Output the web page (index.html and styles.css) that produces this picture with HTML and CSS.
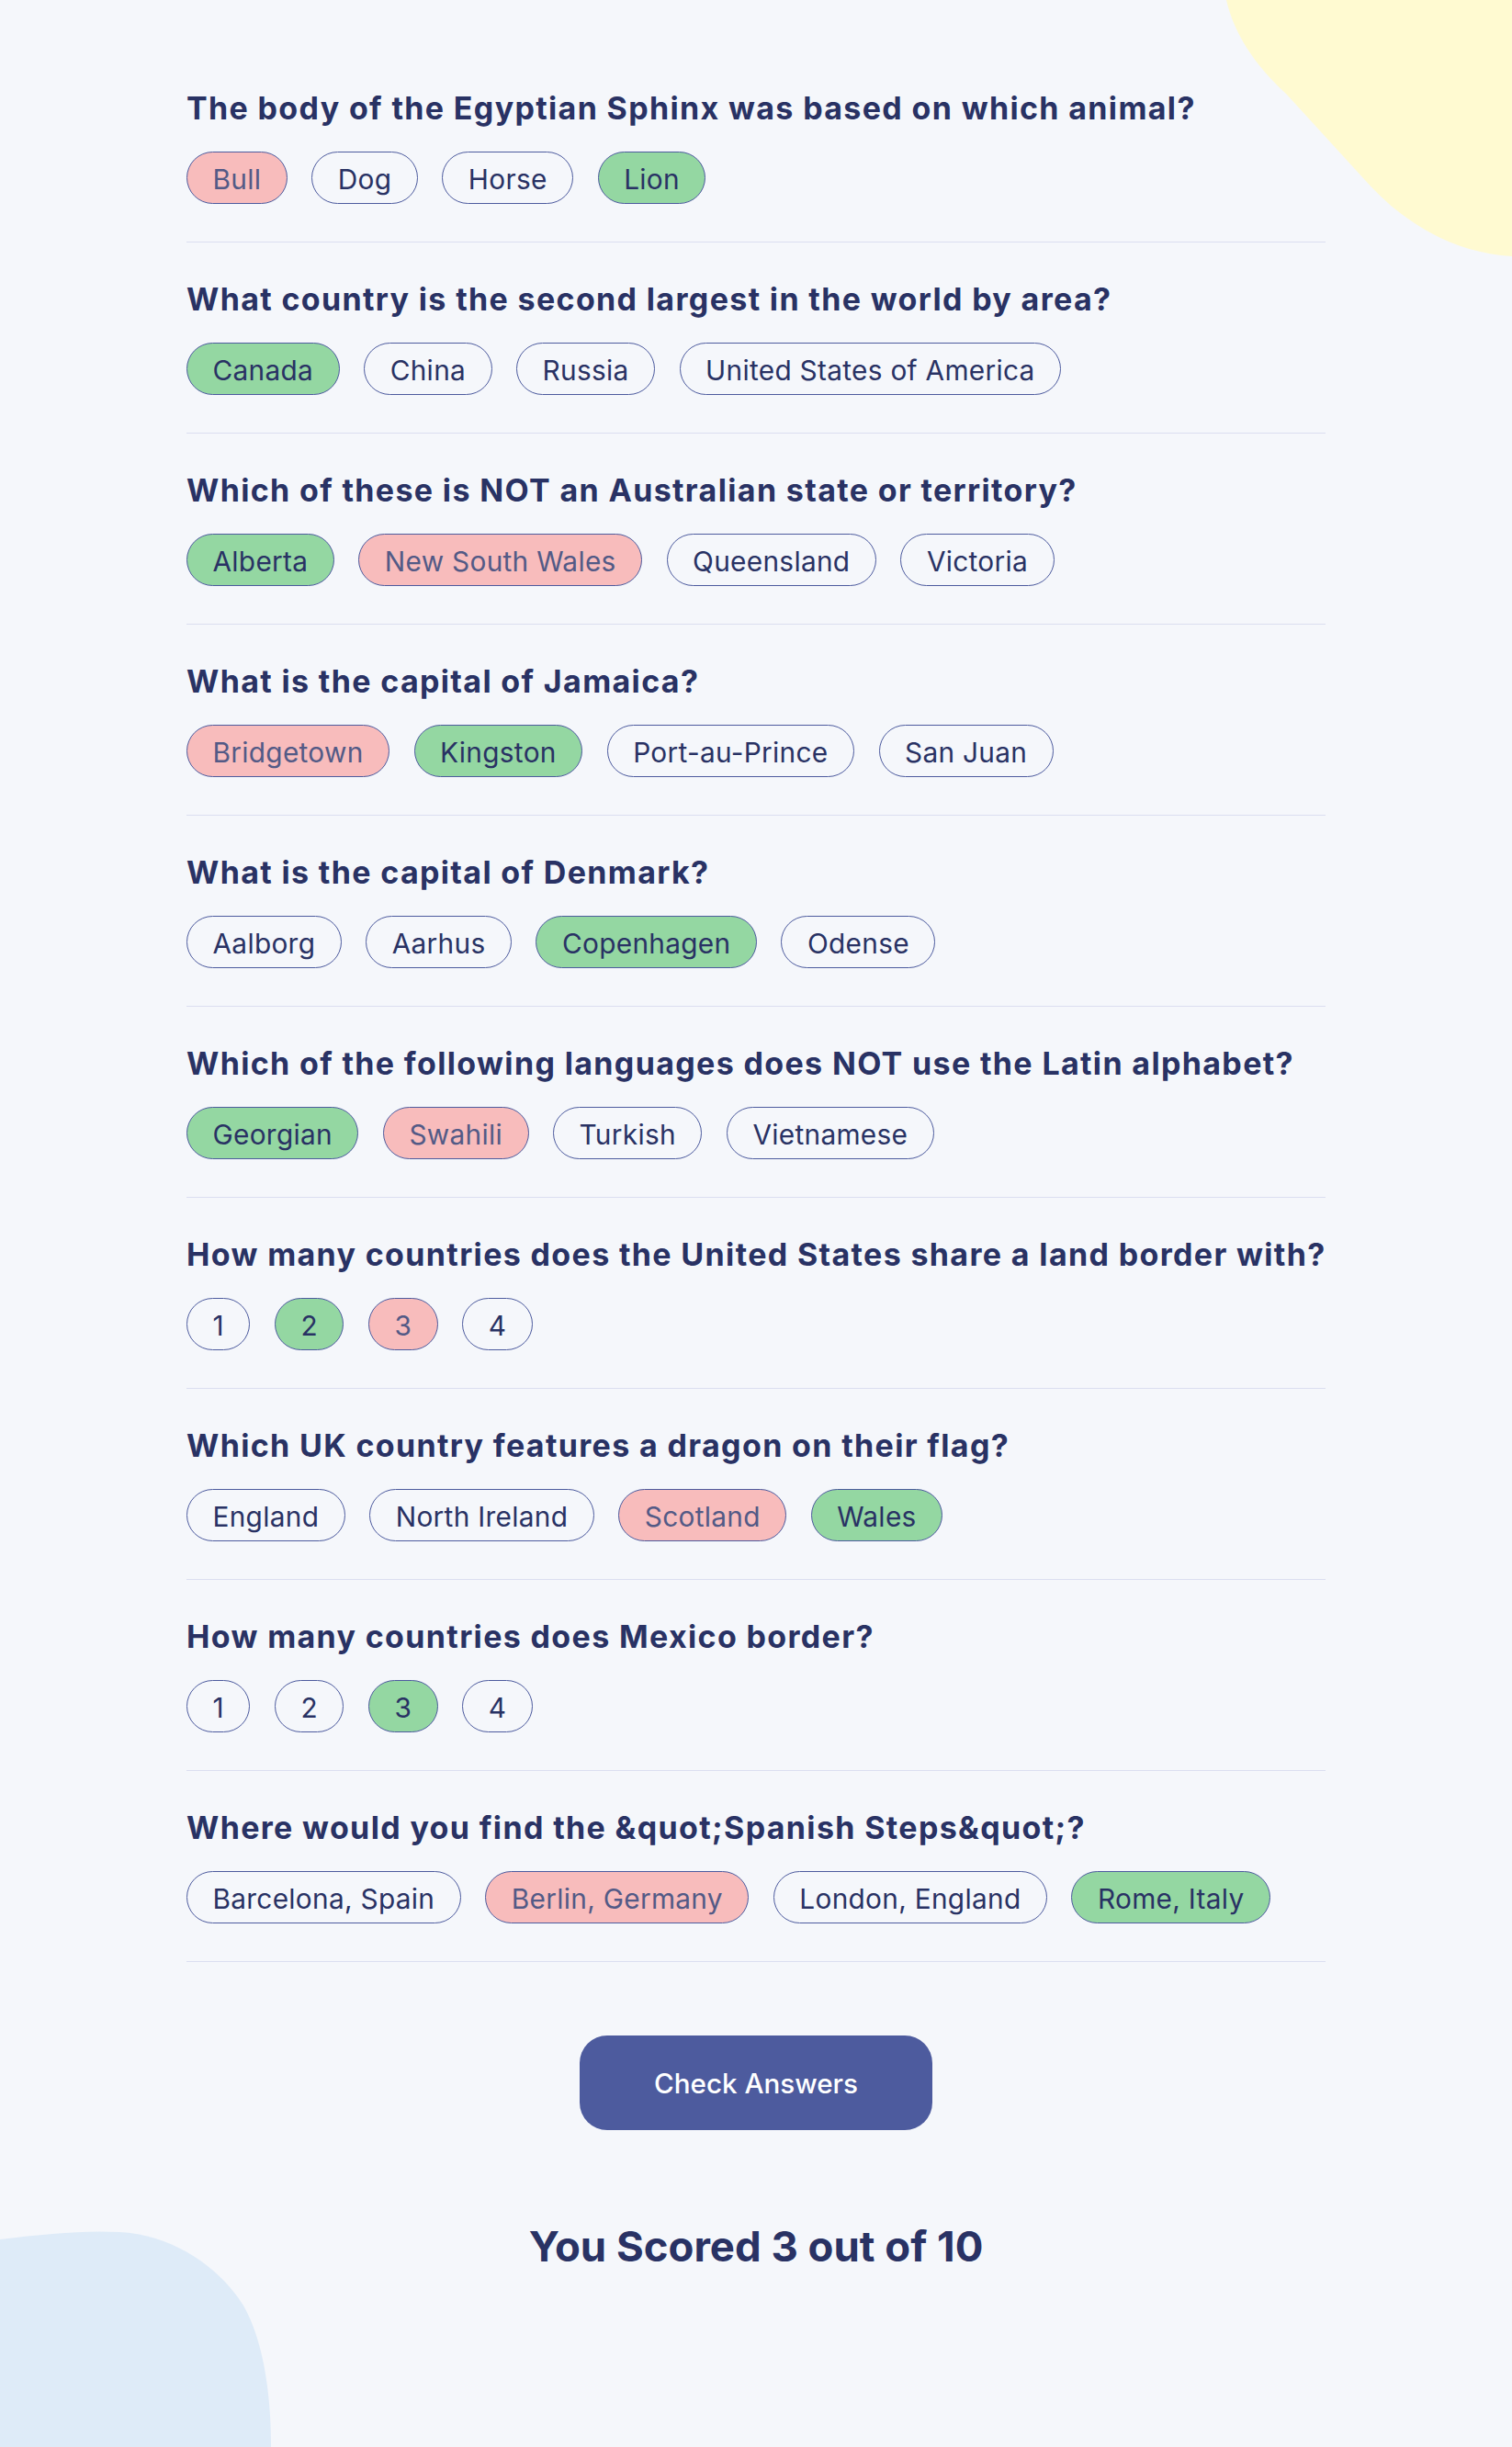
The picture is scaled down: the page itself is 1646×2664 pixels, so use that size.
FILE: index.html
```html
<!DOCTYPE html>
<html lang="en">
<head>
<meta charset="utf-8">
<title>Quizzical</title>
<link rel="stylesheet" href="styles.css">
</head>
<body>
<div class="page">
  <svg class="blob blob-yellow" width="311" height="280" viewBox="0 0 311 280" aria-hidden="true">
    <path d="M0 0 C8 35 30 70 65 102 L150 195 C185 235 240 275 311 279 L311 0 Z" fill="#FFFAD1"/>
  </svg>
  <svg class="blob blob-blue" width="296" height="244" viewBox="0 0 296 244" aria-hidden="true">
    <path d="M0 18 C50 12 90 8 130 10 C190 13 240 50 265 90 C285 125 295 180 295 244 L0 244 Z" fill="#DEEBF8"/>
  </svg>

  <main class="quiz">
    <section class="question">
      <h2 class="question-title">The body of the Egyptian Sphinx was based on which animal?</h2>
      <div class="answers">
        <span class="answer wrong">Bull</span>
        <span class="answer">Dog</span>
        <span class="answer">Horse</span>
        <span class="answer correct">Lion</span>
      </div>
    </section>
    <section class="question">
      <h2 class="question-title">What country is the second largest in the world by area?</h2>
      <div class="answers">
        <span class="answer correct">Canada</span>
        <span class="answer">China</span>
        <span class="answer">Russia</span>
        <span class="answer">United States of America</span>
      </div>
    </section>
    <section class="question">
      <h2 class="question-title">Which of these is NOT an Australian state or territory?</h2>
      <div class="answers">
        <span class="answer correct">Alberta</span>
        <span class="answer wrong">New South Wales</span>
        <span class="answer">Queensland</span>
        <span class="answer">Victoria</span>
      </div>
    </section>
    <section class="question">
      <h2 class="question-title">What is the capital of Jamaica?</h2>
      <div class="answers">
        <span class="answer wrong">Bridgetown</span>
        <span class="answer correct">Kingston</span>
        <span class="answer">Port-au-Prince</span>
        <span class="answer">San Juan</span>
      </div>
    </section>
    <section class="question">
      <h2 class="question-title">What is the capital of Denmark?</h2>
      <div class="answers">
        <span class="answer">Aalborg</span>
        <span class="answer">Aarhus</span>
        <span class="answer correct">Copenhagen</span>
        <span class="answer">Odense</span>
      </div>
    </section>
    <section class="question">
      <h2 class="question-title">Which of the following languages does NOT use the Latin alphabet?</h2>
      <div class="answers">
        <span class="answer correct">Georgian</span>
        <span class="answer wrong">Swahili</span>
        <span class="answer">Turkish</span>
        <span class="answer">Vietnamese</span>
      </div>
    </section>
    <section class="question">
      <h2 class="question-title">How many countries does the United States share a land border with?</h2>
      <div class="answers">
        <span class="answer">1</span>
        <span class="answer correct">2</span>
        <span class="answer wrong">3</span>
        <span class="answer">4</span>
      </div>
    </section>
    <section class="question">
      <h2 class="question-title">Which UK country features a dragon on their flag?</h2>
      <div class="answers">
        <span class="answer">England</span>
        <span class="answer">North Ireland</span>
        <span class="answer wrong">Scotland</span>
        <span class="answer correct">Wales</span>
      </div>
    </section>
    <section class="question">
      <h2 class="question-title">How many countries does Mexico border?</h2>
      <div class="answers">
        <span class="answer">1</span>
        <span class="answer">2</span>
        <span class="answer correct">3</span>
        <span class="answer">4</span>
      </div>
    </section>
    <section class="question">
      <h2 class="question-title">Where would you find the &amp;quot;Spanish Steps&amp;quot;?</h2>
      <div class="answers">
        <span class="answer">Barcelona, Spain</span>
        <span class="answer wrong">Berlin, Germany</span>
        <span class="answer">London, England</span>
        <span class="answer correct">Rome, Italy</span>
      </div>
    </section>

    <button class="check-btn" type="button">Check Answers</button>
    <p class="score">You Scored 3 out of 10</p>
  </main>
</div>
</body>
</html>
```
FILE: styles.css
```css
html, body {
  margin: 0;
  padding: 0;
  background: #F5F7FB;
}

body {
  font-family: Inter, "Noto Sans", sans-serif;
  color: #293264;
}

.page {
  position: relative;
  min-height: 100vh;
  overflow: hidden;
}

.blob {
  position: absolute;
  display: block;
}

.blob-yellow {
  top: 0;
  right: 0;
}

.blob-blue {
  bottom: 0;
  left: 0;
}

.quiz {
  position: relative;
  width: 1240px;
  margin: 0 auto;
  padding-top: 98px;
}

.question {
  padding-bottom: 41px;
  border-bottom: 1px solid #DBDEF0;
}

.question + .question {
  margin-top: 42px;
}

.question-title {
  margin: 0 0 27px;
  font-family: Inter, sans-serif;
  font-weight: 700;
  font-size: 34px;
  line-height: 40px;
  letter-spacing: 1.35px;
  white-space: nowrap;
  color: #293264;
}

.answers {
  display: flex;
  gap: 26.5px;
}

.answer {
  box-sizing: border-box;
  height: 57px;
  display: flex;
  align-items: center;
  padding: 3px 27.5px 0;
  border: 1.5px solid #4D5B9E;
  border-radius: 999px;
  font-family: Inter, sans-serif;
  font-weight: 400;
  font-size: 29.8px;
  letter-spacing: 0.3px;
  color: #293264;
  white-space: nowrap;
}

.answer.correct {
  background: #94D7A2;
}

.answer.wrong {
  background: #F8BCBC;
  color: #535A86;
}

.check-btn {
  display: block;
  box-sizing: border-box;
  height: 103px;
  margin: 80px auto 0;
  padding: 0 81px;
  border: none;
  border-radius: 30px;
  background: #4D5B9E;
  color: #FFFFFF;
  font-family: Inter, sans-serif;
  font-weight: 500;
  font-size: 29.6px;
}

.score {
  margin: 99px 0 0;
  text-align: center;
  font-family: Inter, sans-serif;
  font-weight: 700;
  font-size: 45.5px;
  line-height: 55px;
  color: #293264;
}
```
